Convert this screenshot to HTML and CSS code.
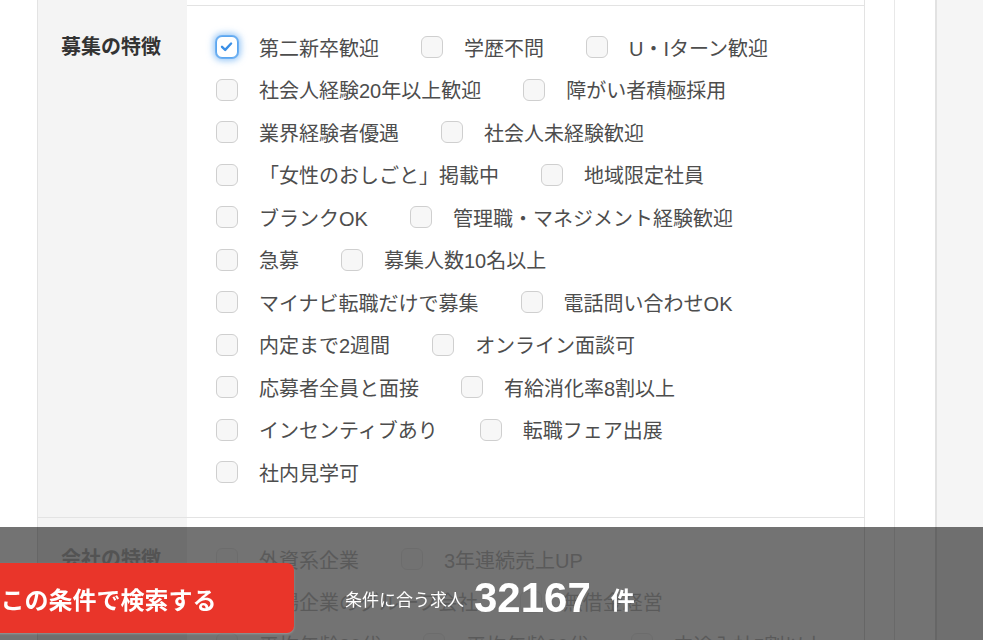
FILE: index.html
```html
<!DOCTYPE html>
<html lang="ja">
<head>
<meta charset="utf-8">
<title>募集の特徴</title>
<link rel="stylesheet" href="styles.css">
</head>
<body>
<div class="page">
  <main class="main">
    <div class="table">
      <div class="row row-prev"><div class="th"></div><div class="td"></div></div>
      <div class="row">
        <div class="th">募集の特徴</div>
        <div class="td">
          <ul class="checks">
            <li class="check"><span class="box on"><svg viewBox="0 0 22 22" width="20" height="20"><polyline points="5.5,10.8 9,14.2 15.5,7.2" fill="none" stroke="#3a8fe6" stroke-width="2.6" stroke-linecap="round" stroke-linejoin="round"/></svg></span>第二新卒歓迎</li>
            <li class="check"><span class="box"></span>学歴不問</li>
            <li class="check"><span class="box"></span>U・Iターン歓迎</li>
            <li class="check"><span class="box"></span>社会人経験20年以上歓迎</li>
            <li class="check"><span class="box"></span>障がい者積極採用</li>
            <li class="check"><span class="box"></span>業界経験者優遇</li>
            <li class="check"><span class="box"></span>社会人未経験歓迎</li>
            <li class="check"><span class="box"></span>「女性のおしごと」掲載中</li>
            <li class="check"><span class="box"></span>地域限定社員</li>
            <li class="check"><span class="box"></span>ブランクOK</li>
            <li class="check"><span class="box"></span>管理職・マネジメント経験歓迎</li>
            <li class="check"><span class="box"></span>急募</li>
            <li class="check"><span class="box"></span>募集人数10名以上</li>
            <li class="check"><span class="box"></span>マイナビ転職だけで募集</li>
            <li class="check"><span class="box"></span>電話問い合わせOK</li>
            <li class="check"><span class="box"></span>内定まで2週間</li>
            <li class="check"><span class="box"></span>オンライン面談可</li>
            <li class="check"><span class="box"></span>応募者全員と面接</li>
            <li class="check"><span class="box"></span>有給消化率8割以上</li>
            <li class="check"><span class="box"></span>インセンティブあり</li>
            <li class="check"><span class="box"></span>転職フェア出展</li>
            <li class="check"><span class="box"></span>社内見学可</li>
          </ul>
        </div>
      </div>
      <div class="row row-under">
        <div class="th"><span class="faded">会社の特徴</span></div>
        <div class="td">
          <ul class="checks checks-tight faded">
            <li class="check"><span class="box"></span>外資系企業</li>
            <li class="check"><span class="box"></span>3年連続売上UP</li>
            <li class="check"><span class="box"></span>上場企業のグループ会社</li>
            <li class="check"><span class="box"></span>無借金経営</li>
            <li class="check"><span class="box"></span>平均年齢30代</li>
            <li class="check"><span class="box"></span>平均年齢20代</li>
            <li class="check"><span class="box"></span>中途入社5割以上</li>
          </ul>
        </div>
      </div>
    </div>
  </main>
  <div class="spacer"></div>
  <aside class="side"></aside>
</div>
<div class="searchbar">
  <button class="search-btn" type="button">この条件で検索する</button>
  <div class="count">
    <span class="count-label">条件に合う求人</span>
    <span class="count-num">32167</span>
    <span class="count-unit">件</span>
  </div>
</div>
</body>
</html>
```
FILE: styles.css
```css
* {
  box-sizing: border-box;
}

html,
body {
  margin: 0;
  height: 100%;
  overflow: hidden;
}

body {
  font-family: "Liberation Sans", "Noto Sans CJK JP", sans-serif;
  color: #4d4d4d;
  background: #fff;
}

.page {
  display: flex;
  min-height: 100%;
}

.main {
  flex: none;
  width: 895px;
  padding-left: 37px;
  border-right: 1px solid #e8e8e8;
}

.spacer {
  flex: none;
  width: 40px;
}

.side {
  flex: 1;
  background: #f5f5f5;
  border-left: 2px solid #e2e2e2;
}

.table {
  width: 828px;
  border-left: 1px solid #e3e3e3;
  border-right: 1px solid #e3e3e3;
}

.row {
  display: flex;
  border-top: 1px solid #e3e3e3;
}

.row-prev {
  border-top: 0;
  height: 5px;
}

.th {
  flex: none;
  width: 149px;
  background: #f4f4f4;
  padding: 25px 0 0 23px;
  font-size: 20px;
  line-height: 32px;
  font-weight: 700;
  color: #333;
}

.td {
  flex: 1;
  padding: 25px 0 29px 29px;
}

.checks {
  list-style: none;
  margin: 0;
  padding: 0;
  display: flex;
  flex-wrap: wrap;
  row-gap: 10.5px;
}

.checks-tight {
  margin-right: -20px;
}

.faded {
  opacity: 0.3;
}

.check {
  display: flex;
  align-items: center;
  height: 32px;
  margin-right: 42px;
  font-size: 20px;
  white-space: nowrap;
}

.box {
  flex: none;
  display: flex;
  align-items: center;
  justify-content: center;
  width: 22px;
  height: 22px;
  margin-right: 21px;
  border: 1px solid #cfcfcf;
  border-radius: 6px;
  background: #f7f7f7;
}

.box.on {
  background: #fff;
  border-color: #5aa6f0;
  box-shadow: 0 0 0 1px rgba(80, 160, 240, 0.7), 0 0 6px 3px rgba(80, 160, 240, 0.55);
}

.searchbar {
  position: fixed;
  left: 0;
  right: 0;
  bottom: 0;
  height: 113px;
  padding: 36px 0 7px;
  display: flex;
  align-items: center;
  background: rgba(0, 0, 0, 0.55);
}

.search-btn {
  flex: none;
  width: 371px;
  height: 70px;
  margin-left: -77px;
  border: 0;
  border-radius: 7px;
  background: #e9352a;
  color: #fff;
  font-family: "Noto Sans CJK JP", sans-serif;
  font-size: 24px;
  font-weight: 700;
  box-shadow: 0 1px 2px rgba(255, 255, 255, 0.25);
}

.count {
  display: flex;
  align-items: center;
  margin-left: 51px;
  color: #fff;
}

.count-label {
  font-family: "Noto Sans CJK JP", sans-serif;
  font-size: 17px;
}

.count-num {
  margin-left: 10px;
  font-family: "Liberation Sans", sans-serif;
  font-size: 42px;
  font-weight: 700;
}

.count-unit {
  margin-left: 20px;
  font-family: "Noto Sans CJK JP", sans-serif;
  font-size: 24px;
  font-weight: 700;
}
```
